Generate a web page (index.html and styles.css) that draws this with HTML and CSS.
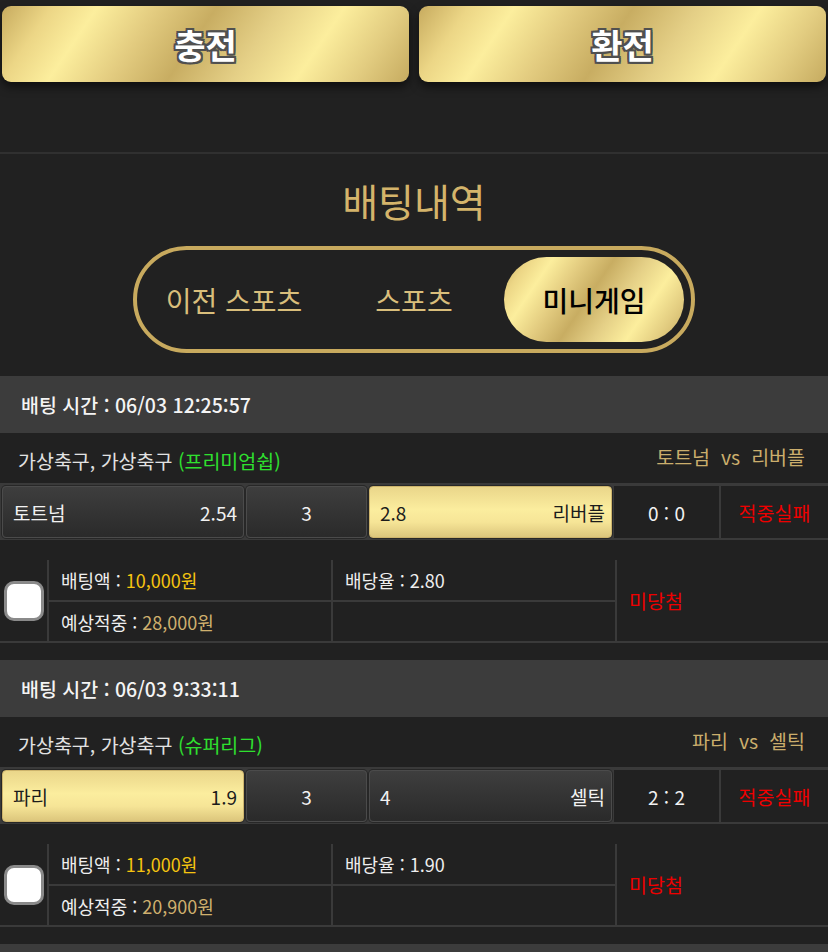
FILE: index.html
```html
<!DOCTYPE html>
<html lang="ko">
<head>
<meta charset="utf-8">
<title>배팅내역</title>
<link rel="stylesheet" href="styles.css">
</head>
<body>
<div class="page">
  <div class="top-buttons">
    <button class="gold-btn gold">충전</button>
    <button class="gold-btn gold">환전</button>
  </div>

  <section class="history">
    <h2 class="title">배팅내역</h2>
    <div class="tabs">
      <div class="tab">이전 스포츠</div>
      <div class="tab">스포츠</div>
      <div class="tab active gold">미니게임</div>
    </div>
  </section>

  <div class="bet-list">
    <div class="bet">
      <div class="bet-head">배팅 시간 : 06/03 12:25:57</div>
      <div class="league-row">
        <span class="league">가상축구, 가상축구 <span class="green">(프리미엄쉽)</span></span>
        <span class="match">토트넘 &nbsp;vs &nbsp;리버플</span>
      </div>
      <div class="odds-row">
        <div class="odd"><span>토트넘</span><span>2.54</span></div>
        <div class="odd center">3</div>
        <div class="odd selected"><span>2.8</span><span>리버플</span></div>
        <div class="cell">0 : 0</div>
        <div class="cell red">적중실패</div>
      </div>
      <div class="details">
        <div class="chk-cell"><span class="checkbox"></span></div>
        <div class="dcell top">배팅액 :&nbsp;<span class="yellow">10,000원</span></div>
        <div class="dcell top">배당율 :&nbsp;2.80</div>
        <div class="result">미당첨</div>
        <div class="dcell">예상적중 :&nbsp;<span class="goldtxt">28,000원</span></div>
        <div class="dcell"></div>
      </div>
    </div>

    <div class="bet">
      <div class="bet-head">배팅 시간 : 06/03 9:33:11</div>
      <div class="league-row">
        <span class="league">가상축구, 가상축구 <span class="green">(슈퍼리그)</span></span>
        <span class="match">파리 &nbsp;vs &nbsp;셀틱</span>
      </div>
      <div class="odds-row">
        <div class="odd selected"><span>파리</span><span>1.9</span></div>
        <div class="odd center">3</div>
        <div class="odd"><span>4</span><span>셀틱</span></div>
        <div class="cell">2 : 2</div>
        <div class="cell red">적중실패</div>
      </div>
      <div class="details">
        <div class="chk-cell"><span class="checkbox"></span></div>
        <div class="dcell top">배팅액 :&nbsp;<span class="yellow">11,000원</span></div>
        <div class="dcell top">배당율 :&nbsp;1.90</div>
        <div class="result">미당첨</div>
        <div class="dcell">예상적중 :&nbsp;<span class="goldtxt">20,900원</span></div>
        <div class="dcell"></div>
      </div>
    </div>

    <div class="bet">
      <div class="bet-head"></div>
    </div>
  </div>
</div>
</body>
</html>
```

FILE: styles.css
```css
* { box-sizing: border-box; }

html, body {
  margin: 0;
  padding: 0;
  background: #212121;
}

body {
  font-family: "Noto Sans CJK KR", "Noto Sans", sans-serif;
  color: #eeeeee;
}

.page {
  width: 828px;
}

.gold {
  background: linear-gradient(124deg,
    #c7ab5f 0%,
    #ecd686 11%,
    #fcee9d 21%,
    #e3cc80 34%,
    #c8ad62 47%,
    #e4cf86 61%,
    #fcee9d 75%,
    #e2cc80 88%,
    #c6ab60 100%);
}

/* top buttons */
.top-buttons {
  display: flex;
  gap: 10px;
  padding: 6px 2px 0;
}

.gold-btn {
  flex: 1;
  height: 76px;
  border: none;
  border-radius: 9px;
  font-family: "Noto Sans CJK KR", "Noto Sans", sans-serif;
  font-size: 34px;
  font-weight: 700;
  color: #ffffff;
  box-shadow: 0 5px 10px rgba(0, 0, 0, 0.55);
  text-shadow:
    -2px -2px 0 #505050, 2px -2px 0 #505050,
    -2px 2px 0 #505050, 2px 2px 0 #505050,
    0 -2px 0 #505050, 0 2px 0 #505050,
    -2px 0 0 #505050, 2px 0 0 #505050;
  padding: 0;
  cursor: pointer;
}

/* history section */
.history {
  margin-top: 70px;
  border-top: 2px solid #303030;
  padding-top: 22px;
}

.title {
  margin: 0;
  text-align: center;
  font-size: 39px;
  line-height: 48px;
  font-weight: 400;
  color: #d4b46b;
}

.tabs {
  margin: 22px auto 0;
  width: 562px;
  height: 107px;
  border: 4px solid #c8aa5e;
  border-radius: 60px;
  padding: 7px;
  display: grid;
  grid-template-columns: repeat(3, 180px);
}

.tab {
  display: flex;
  align-items: center;
  justify-content: center;
  font-size: 28px;
  color: #d9be7b;
  border-radius: 45px;
}

.tab.active {
  color: #000000;
  font-weight: 500;
}

/* bet list */
.bet-list {
  margin-top: 23px;
}

.bet {
  margin-bottom: 17px;
}

.bet-head {
  height: 57px;
  background: #3c3c3c;
  padding-left: 21px;
  display: flex;
  align-items: center;
  font-size: 19.5px;
  font-weight: 500;
  color: #f4f4f4;
}

.league-row {
  height: 50px;
  display: flex;
  justify-content: space-between;
  align-items: center;
  padding: 0 23px 0 18px;
  font-size: 19.5px;
}

.league {
  color: #e2e2e2;
  margin-top: 4px;
}

.green {
  color: #2fe02f;
}

.match {
  color: #cbae6c;
  margin-bottom: 4px;
}

.odds-row {
  display: grid;
  grid-template-columns: 242px 121px 243px 105px 1fr;
  gap: 2px;
  height: 57px;
  padding: 3px 0 2px 2px;
  background: #3a3a3a;
  font-size: 19px;
}

.odd {
  display: flex;
  justify-content: space-between;
  align-items: center;
  padding: 0 6px 0 10px;
  border: 1px solid #4b4b4b;
  border-radius: 4px;
  background: linear-gradient(#3e3e3e, #2a2a2a);
  box-shadow: 0 0 0 1px #272727;
  color: #f2f2f2;
}

.odd.center {
  justify-content: center;
  padding: 0;
}

.odd.selected {
  border-color: #cdb46c;
  background: linear-gradient(#ead68a 0%, #fbed9e 45%, #f6e597 70%, #dcc67c 100%);
  color: #1c1c1c;
}

.cell {
  display: flex;
  align-items: center;
  justify-content: center;
  background: #212121;
  color: #f2f2f2;
}

.cell.red {
  color: #ee0000;
  font-size: 19.5px;
}

/* details */
.details {
  margin-top: 20px;
  display: grid;
  grid-template-columns: 49px 284px 284px 1fr;
  grid-template-rows: 42px 39px;
  border-bottom: 2px solid #3a3a3a;
  font-size: 18px;
}

.chk-cell {
  grid-row: span 2;
  border-right: 2px solid #3a3a3a;
  display: flex;
  align-items: center;
  justify-content: center;
}

.checkbox {
  display: block;
  width: 40px;
  height: 40px;
  border: 3px solid #8a8a8a;
  border-radius: 10px;
  background: #ffffff;
}

.dcell {
  border-right: 2px solid #3a3a3a;
  padding-left: 12px;
  display: flex;
  align-items: center;
  color: #eeeeee;
}

.dcell.top {
  border-bottom: 2px solid #3a3a3a;
}

.result {
  grid-row: span 2;
  padding-left: 12px;
  display: flex;
  align-items: center;
  color: #ee0000;
  font-size: 19.5px;
}

.yellow {
  color: #f6c410;
}

.goldtxt {
  color: #cfb06e;
}
```
